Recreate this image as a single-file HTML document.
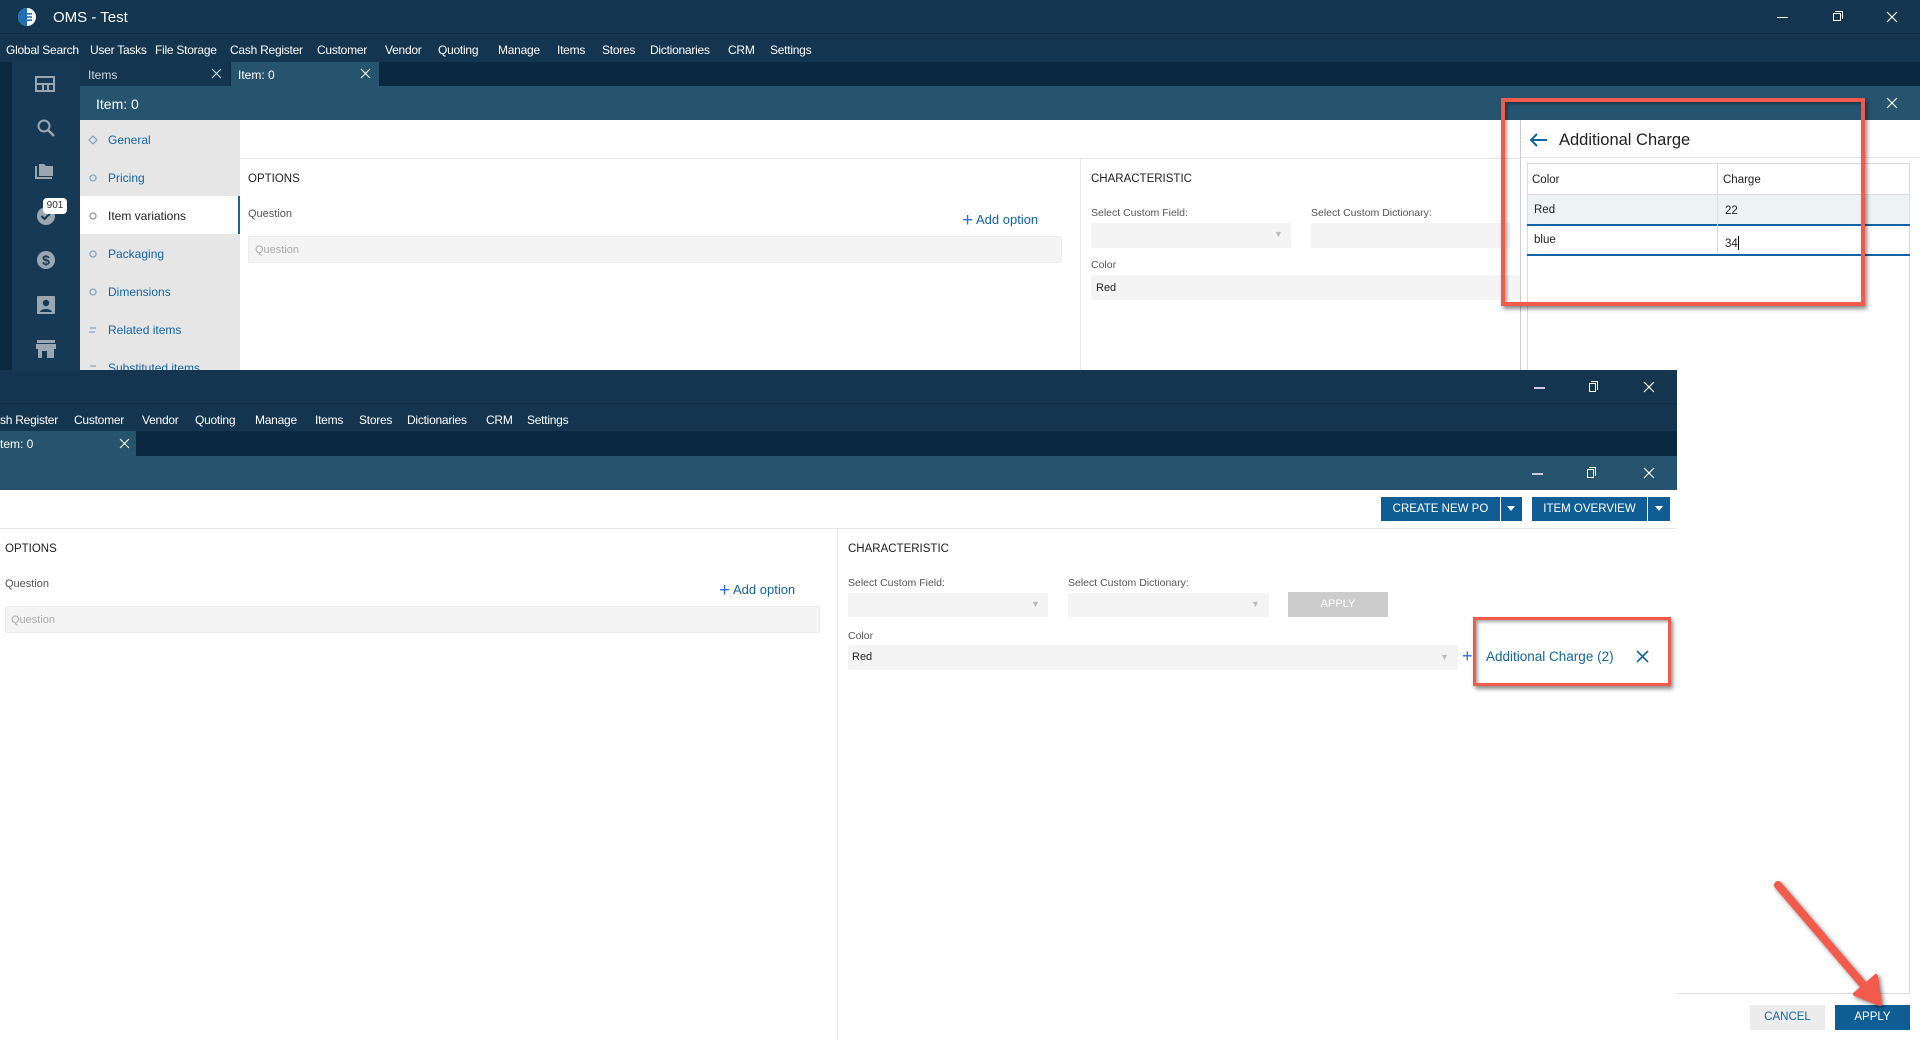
<!DOCTYPE html>
<html><head><meta charset="utf-8">
<style>
*{box-sizing:border-box;margin:0;padding:0}
body{width:1920px;height:1040px;overflow:hidden;background:#fff;font-family:"Liberation Sans",sans-serif;position:relative;color:#222}
.a{position:absolute}
.t{position:absolute;white-space:nowrap;line-height:1}
.menu span{position:absolute;top:0;color:#fff;font-size:12px;letter-spacing:-0.25px}
.lbl{font-size:11px;color:#555}
.inp{position:absolute;background:#f4f4f4;border-radius:2px}
.blue{color:#1464a5}
</style></head><body>

<!-- TOP WINDOW -->
<div class="a" style="left:0;top:0;width:1920px;height:34px;background:#14354f;border-bottom:1px solid #0c2a40"></div>
<svg class="a" style="left:17px;top:7px" width="20" height="20" viewBox="0 0 20 20"><circle cx="10" cy="10" r="9" fill="#fff"/><path d="M10 1a9 9 0 0 0 0 18z" fill="#1e6fb5"/><rect x="8" y="6" width="7" height="1.6" fill="#1e6fb5"/><rect x="8" y="9.2" width="7" height="1.6" fill="#1e6fb5"/><rect x="8" y="12.4" width="7" height="1.6" fill="#1e6fb5"/></svg>
<div class="t" style="left:53px;top:10px;color:#fff;font-size:15px">OMS - Test</div>
<div class="a" style="left:1777px;top:17px;width:11px;height:1px;background:#fff"></div>
<div class="a" style="left:1833px;top:13px;width:8px;height:8px;border:1px solid #fff"></div>
<div class="a" style="left:1835px;top:11px;width:8px;height:8px;border-top:1px solid #fff;border-right:1px solid #fff"></div>
<svg class="a" style="left:1886px;top:11px" width="12" height="12"><path d="M1 1L11 11M11 1L1 11" stroke="#fff" stroke-width="1.2"/></svg>

<div class="a menu" style="left:0;top:34px;width:1920px;height:28px;background:#14354f">
<div style="position:relative;top:9px">
<span style="left:6px">Global Search</span><span style="left:90px">User Tasks</span><span style="left:155px">File Storage</span><span style="left:230px">Cash Register</span><span style="left:317px">Customer</span><span style="left:385px">Vendor</span><span style="left:438px">Quoting</span><span style="left:498px">Manage</span><span style="left:557px">Items</span><span style="left:602px">Stores</span><span style="left:650px">Dictionaries</span><span style="left:728px">CRM</span><span style="left:770px">Settings</span>
</div></div>

<!-- sidebar -->
<div class="a" style="left:0;top:62px;width:12px;height:308px;background:#0b2a40"></div>
<div class="a" style="left:12px;top:62px;width:68px;height:308px;background:#163a55"></div>
<svg class="a" style="left:35px;top:76px" width="20" height="16"><rect x="1" y="1" width="18" height="14" fill="none" stroke="#9aa6b0" stroke-width="2"/><rect x="1" y="7" width="18" height="2" fill="#9aa6b0"/><rect x="7" y="8" width="2" height="7" fill="#9aa6b0"/><rect x="12" y="8" width="2" height="7" fill="#9aa6b0"/></svg>
<svg class="a" style="left:36px;top:118px" width="20" height="20"><circle cx="8" cy="8" r="5.5" fill="none" stroke="#9aa6b0" stroke-width="2"/><path d="M12 12L18 18" stroke="#9aa6b0" stroke-width="2.4"/></svg>
<svg class="a" style="left:35px;top:163px" width="20" height="16"><path d="M1 3v12h16" fill="none" stroke="#9aa6b0" stroke-width="2"/><path d="M4 1h5l2 2h7v10H4z" fill="#9aa6b0"/></svg>
<svg class="a" style="left:36px;top:206px" width="20" height="20"><circle cx="10" cy="10" r="9" fill="#9aa6b0"/><path d="M5.5 10l3 3 6-6" fill="none" stroke="#163a55" stroke-width="2"/></svg>
<div class="a" style="left:43px;top:198px;width:24px;height:16px;background:#fff;border-radius:4px;font-size:10px;color:#333;text-align:center;line-height:16px">901</div>
<svg class="a" style="left:36px;top:250px" width="20" height="20"><circle cx="10" cy="10" r="9" fill="#9aa6b0"/><text x="10" y="15" text-anchor="middle" font-size="14" font-weight="bold" fill="#163a55" font-family="Liberation Sans">$</text></svg>
<svg class="a" style="left:37px;top:296px" width="18" height="18"><rect x="0" y="0" width="18" height="18" rx="1" fill="#9aa6b0"/><circle cx="9" cy="7" r="3.2" fill="#163a55"/><path d="M3 16c1-4 11-4 12 0z" fill="#163a55"/></svg>
<svg class="a" style="left:36px;top:340px" width="20" height="18"><rect x="1" y="0" width="18" height="3" fill="#9aa6b0"/><rect x="0" y="4" width="20" height="5" fill="#9aa6b0"/><rect x="2" y="9" width="16" height="9" fill="#9aa6b0"/><rect x="6" y="11" width="5" height="7" fill="#163a55"/></svg>

<!-- tabs row -->
<div class="a" style="left:80px;top:62px;width:1840px;height:24px;background:#0a2840"></div>
<div class="a" style="left:80px;top:62px;width:150px;height:24px;background:#14354f"></div>
<div class="t" style="left:88px;top:69px;color:#cfd8df;font-size:12px">Items</div>
<svg class="a" style="left:211px;top:68px" width="11" height="11"><path d="M1 1L10 10M10 1L1 10" stroke="#cfd8df" stroke-width="1.1"/></svg>
<div class="a" style="left:231px;top:62px;width:148px;height:24px;background:#26536e"></div>
<div class="t" style="left:238px;top:69px;color:#fff;font-size:12px">Item: 0</div>
<svg class="a" style="left:360px;top:68px" width="11" height="11"><path d="M1 1L10 10M10 1L1 10" stroke="#fff" stroke-width="1.1"/></svg>

<!-- header -->
<div class="a" style="left:80px;top:86px;width:1840px;height:34px;background:#26536e"></div>
<div class="t" style="left:96px;top:97px;color:#fff;font-size:14px">Item: 0</div>
<svg class="a" style="left:1886px;top:97px" width="12" height="12"><path d="M1 1L11 11M11 1L1 11" stroke="#fff" stroke-width="1.2"/></svg>

<!-- nav -->
<div class="a" style="left:80px;top:120px;width:160px;height:250px;background:#e6e6e6"></div>
<div class="a" style="left:80px;top:196px;width:160px;height:38px;background:#fff;border-right:2px solid #1464a5"></div>
<div class="t blue" style="left:108px;top:134px;font-size:12px">General</div>
<div class="t blue" style="left:108px;top:172px;font-size:12px">Pricing</div>
<div class="t" style="left:108px;top:210px;font-size:12px;color:#222">Item variations</div>
<div class="t blue" style="left:108px;top:248px;font-size:12px">Packaging</div>
<div class="t blue" style="left:108px;top:286px;font-size:12px">Dimensions</div>
<div class="t blue" style="left:108px;top:324px;font-size:12px">Related items</div>
<div class="t blue" style="left:108px;top:362px;font-size:12px">Substituted items</div>
<svg class="a" style="left:88px;top:135px" width="10" height="10"><path d="M5 1L9 5L5 9L1 5z" fill="none" stroke="#7fa6c4" stroke-width="1.3"/></svg>
<svg class="a" style="left:88px;top:173px" width="10" height="10"><circle cx="5" cy="5" r="3" fill="none" stroke="#7fa6c4" stroke-width="1.3"/></svg>
<svg class="a" style="left:88px;top:211px" width="10" height="10"><circle cx="5" cy="5" r="3" fill="none" stroke="#999" stroke-width="1.3"/></svg>
<svg class="a" style="left:88px;top:249px" width="10" height="10"><circle cx="5" cy="5" r="3" fill="none" stroke="#7fa6c4" stroke-width="1.3"/></svg>
<svg class="a" style="left:88px;top:287px" width="10" height="10"><circle cx="5" cy="5" r="3" fill="none" stroke="#7fa6c4" stroke-width="1.3"/></svg>
<svg class="a" style="left:88px;top:325px" width="10" height="10"><path d="M2 3h6M1 7h6" stroke="#7fa6c4" stroke-width="1.2"/></svg>
<svg class="a" style="left:88px;top:363px" width="10" height="7"><path d="M2 3h6" stroke="#7fa6c4" stroke-width="1.2"/></svg>

<!-- content top -->
<div class="a" style="left:240px;top:158px;width:1280px;height:1px;background:#e6e6e6"></div>
<div class="t" style="left:248px;top:174px;font-size:11.5px">OPTIONS</div>
<div class="t lbl" style="left:248px;top:209px">Question</div>
<div class="t blue" style="left:962px;top:209px;font-size:13px"><span style="font-size:19px;position:relative;top:2px;color:#2a6fe0">+</span> Add option</div>
<div class="inp" style="left:248px;top:236px;width:814px;height:27px;border:1px solid #ececec"></div>
<div class="t" style="left:255px;top:245px;font-size:11px;color:#aaa">Question</div>
<div class="a" style="left:1080px;top:158px;width:1px;height:212px;background:#e8e8e8"></div>
<div class="t" style="left:1091px;top:174px;font-size:11.5px">CHARACTERISTIC</div>
<div class="t lbl" style="left:1091px;top:208px;font-size:10.5px">Select Custom Field:</div>
<div class="t lbl" style="left:1311px;top:208px;font-size:10.5px">Select Custom Dictionary:</div>
<div class="inp" style="left:1091px;top:223px;width:200px;height:25px"></div>
<div class="t" style="left:1274px;top:230px;font-size:9px;color:#bbb">▼</div>
<div class="inp" style="left:1311px;top:223px;width:200px;height:25px"></div>
<div class="t lbl" style="left:1091px;top:260px;font-size:10.5px">Color</div>
<div class="inp" style="left:1091px;top:275px;width:430px;height:25px"></div>
<div class="t" style="left:1096px;top:283px;font-size:11px">Red</div>

<!-- popup panel (right) -->
<div class="a" style="left:1520px;top:120px;width:400px;height:920px;background:#fff;border-left:1px solid #ccc"></div>
<svg class="a" style="left:1529px;top:133px" width="20" height="14"><path d="M18 7H3M8 1L2 7L8 13" fill="none" stroke="#1464a5" stroke-width="2"/></svg>
<div class="t" style="left:1559px;top:132px;font-size:16.5px;color:#222">Additional Charge</div>
<div class="a" style="left:1521px;top:157px;width:399px;height:1px;background:#e6e6e6"></div>
<div class="a" style="left:1527px;top:163px;width:383px;height:831px;border:1px solid #dcdcdc"></div>
<div class="a" style="left:1527px;top:194px;width:383px;height:1px;background:#ddd"></div>
<div class="a" style="left:1528px;top:195px;width:381px;height:29px;background:#edf2f5"></div>
<div class="a" style="left:1527px;top:224px;width:383px;height:2px;background:#1464a5"></div>
<div class="a" style="left:1527px;top:254px;width:383px;height:2px;background:#1464a5"></div>
<div class="a" style="left:1717px;top:164px;width:1px;height:90px;background:#ddd"></div>
<div class="t" style="left:1532px;top:175px;font-size:11.5px">Color</div>
<div class="t" style="left:1723px;top:175px;font-size:11.5px">Charge</div>
<div class="t" style="left:1534px;top:205px;font-size:11.5px">Red</div>
<div class="t" style="left:1725px;top:206px;font-size:11.5px">22</div>
<div class="t" style="left:1534px;top:235px;font-size:11.5px">blue</div>
<div class="t" style="left:1725px;top:236px;font-size:11.5px">34<span style="display:inline-block;width:1px;height:14px;background:#000;vertical-align:-3px"></span></div>
<div class="a" style="left:1501px;top:98px;width:364px;height:208px;border:4px solid #f25a4b;box-shadow:2px 3px 4px rgba(0,0,0,.45), inset 2px 2px 3px rgba(0,0,0,.35)"></div>

<!-- LOWER WINDOW -->
<div class="a" style="left:0;top:370px;width:1677px;height:670px;background:#fff"></div>
<div class="a" style="left:0;top:370px;width:1677px;height:34px;background:#14354f;border-bottom:1px solid #0c2a40"></div>
<div class="a" style="left:1534px;top:387px;width:11px;height:2px;background:#ccd"></div>
<div class="a" style="left:1589px;top:383px;width:7px;height:9px;border:1px solid #fff"></div>
<div class="a" style="left:1591px;top:381px;width:7px;height:9px;border-top:1px solid #fff;border-right:1px solid #fff"></div>
<svg class="a" style="left:1643px;top:381px" width="12" height="12"><path d="M1 1L11 11M11 1L1 11" stroke="#fff" stroke-width="1.2"/></svg>
<div class="a menu" style="left:0;top:404px;width:1677px;height:27px;background:#14354f">
<div style="position:relative;top:9px">
<span style="left:0">sh Register</span><span style="left:74px">Customer</span><span style="left:142px">Vendor</span><span style="left:195px">Quoting</span><span style="left:255px">Manage</span><span style="left:315px">Items</span><span style="left:359px">Stores</span><span style="left:407px">Dictionaries</span><span style="left:486px">CRM</span><span style="left:527px">Settings</span>
</div></div>
<div class="a" style="left:0;top:431px;width:1677px;height:25px;background:#0a2840"></div>
<div class="a" style="left:0;top:431px;width:136px;height:25px;background:#26536e"></div>
<div class="t" style="left:0;top:438px;color:#fff;font-size:12px">tem: 0</div>
<svg class="a" style="left:119px;top:438px" width="11" height="11"><path d="M1 1L10 10M10 1L1 10" stroke="#fff" stroke-width="1.1"/></svg>
<div class="a" style="left:0;top:456px;width:1677px;height:34px;background:#26536e"></div>
<div class="a" style="left:1532px;top:473px;width:11px;height:2px;background:#ccd"></div>
<div class="a" style="left:1587px;top:469px;width:7px;height:9px;border:1px solid #fff"></div>
<div class="a" style="left:1589px;top:467px;width:7px;height:9px;border-top:1px solid #fff;border-right:1px solid #fff"></div>
<svg class="a" style="left:1643px;top:467px" width="12" height="12"><path d="M1 1L11 11M11 1L1 11" stroke="#fff" stroke-width="1.2"/></svg>

<!-- toolbar -->
<div class="a" style="left:1381px;top:497px;width:119px;height:24px;background:#0f5d94"></div>
<div class="t" style="left:1381px;top:504px;width:119px;text-align:center;color:#fff;font-size:11.5px">CREATE NEW PO</div>
<div class="a" style="left:1501px;top:497px;width:21px;height:24px;background:#0f5d94"></div>
<svg class="a" style="left:1507px;top:506px" width="9" height="6"><path d="M0 0h8L4 5z" fill="#fff"/></svg>
<div class="a" style="left:1532px;top:497px;width:115px;height:24px;background:#0f5d94"></div>
<div class="t" style="left:1532px;top:504px;width:115px;text-align:center;color:#fff;font-size:11.5px">ITEM OVERVIEW</div>
<div class="a" style="left:1648px;top:497px;width:22px;height:24px;background:#0f5d94"></div>
<svg class="a" style="left:1655px;top:506px" width="9" height="6"><path d="M0 0h8L4 5z" fill="#fff"/></svg>
<div class="a" style="left:0;top:528px;width:1677px;height:1px;background:#e6e6e6"></div>

<div class="t" style="left:5px;top:544px;font-size:11.5px">OPTIONS</div>
<div class="t lbl" style="left:5px;top:579px">Question</div>
<div class="t blue" style="left:719px;top:579px;font-size:13px"><span style="font-size:19px;position:relative;top:2px;color:#2a6fe0">+</span> Add option</div>
<div class="inp" style="left:5px;top:606px;width:815px;height:27px;border:1px solid #ececec"></div>
<div class="t" style="left:11px;top:615px;font-size:11px;color:#aaa">Question</div>
<div class="a" style="left:837px;top:529px;width:1px;height:511px;background:#e8e8e8"></div>
<div class="t" style="left:848px;top:544px;font-size:11.5px">CHARACTERISTIC</div>
<div class="t lbl" style="left:848px;top:578px;font-size:10.5px">Select Custom Field:</div>
<div class="t lbl" style="left:1068px;top:578px;font-size:10.5px">Select Custom Dictionary:</div>
<div class="inp" style="left:848px;top:593px;width:200px;height:24px"></div>
<div class="t" style="left:1031px;top:600px;font-size:9px;color:#bbb">▼</div>
<div class="inp" style="left:1068px;top:593px;width:201px;height:24px"></div>
<div class="t" style="left:1251px;top:600px;font-size:9px;color:#bbb">▼</div>
<div class="a" style="left:1288px;top:592px;width:100px;height:25px;background:#cccccc"></div>
<div class="t" style="left:1288px;top:599px;width:100px;text-align:center;color:#fff;font-size:11px">APPLY</div>
<div class="t lbl" style="left:848px;top:631px;font-size:10.5px">Color</div>
<div class="inp" style="left:848px;top:645px;width:610px;height:25px"></div>
<div class="t" style="left:852px;top:652px;font-size:11px">Red</div>
<div class="t" style="left:1440px;top:653px;font-size:9px;color:#bbb">▼</div>
<div class="t" style="left:1462px;top:647px;font-size:18px;color:#2a6fe0">+</div>
<div class="t blue" style="left:1486px;top:650px;font-size:13.5px">Additional Charge (2)</div>
<svg class="a" style="left:1636px;top:650px" width="13" height="13"><path d="M1 1L12 12M12 1L1 12" stroke="#1464a5" stroke-width="1.6"/></svg>
<div class="a" style="left:1473px;top:617px;width:198px;height:69px;border:3px solid #f25a4b;box-shadow:2px 3px 4px rgba(0,0,0,.45), inset 2px 2px 3px rgba(0,0,0,.35)"></div>

<!-- bottom buttons -->
<div class="a" style="left:1750px;top:1005px;width:75px;height:25px;background:#ececec"></div>
<div class="t blue" style="left:1750px;top:1012px;width:75px;text-align:center;font-size:11.5px">CANCEL</div>
<div class="a" style="left:1835px;top:1005px;width:75px;height:25px;background:#0f5d94"></div>
<div class="t" style="left:1835px;top:1012px;width:75px;text-align:center;font-size:11.5px;color:#fff">APPLY</div>

<!-- arrow -->
<svg class="a" style="left:1760px;top:870px;filter:drop-shadow(2px 2px 2px rgba(0,0,0,.5))" width="140" height="150"><path d="M18 15L112 125" stroke="#f25a4b" stroke-width="8" stroke-linecap="round"/><path d="M120 134L95 124L116 106z" fill="#f25a4b" stroke="#f25a4b" stroke-width="4" stroke-linejoin="round"/></svg>
</body></html>
